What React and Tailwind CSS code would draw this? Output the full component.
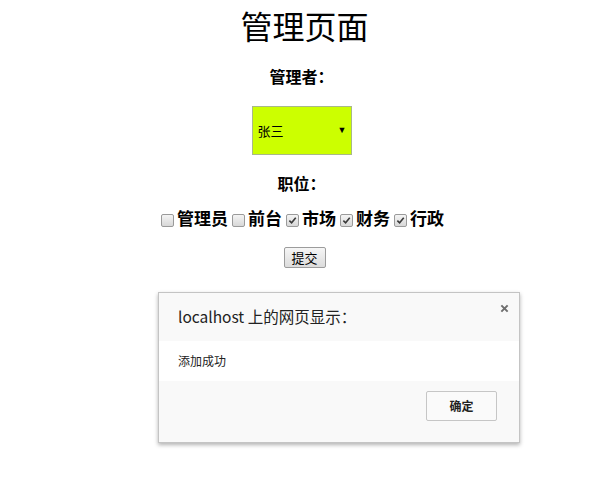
import { useState } from "react";

const roles = [
    { id: "admin", label: "管理员", checked: false },
    { id: "desk", label: "前台", checked: false },
    { id: "market", label: "市场", checked: true },
    { id: "finance", label: "财务", checked: true },
    { id: "office", label: "行政", checked: true },
];

function Box({ checked, onClick }) {
    return (
        <span
            onClick={onClick}
            className="inline-flex w-[13px] h-[13px] items-center justify-center border border-[#9a9a9a] rounded-[2px] bg-gradient-to-b from-[#f4f4f4] to-[#d8d8d8] cursor-pointer"
        >
            {checked && (
                <svg viewBox="0 0 10 10" className="w-[9px] h-[9px]">
                    <path d="M1.5 5.2 L4 7.6 L8.6 2" fill="none" stroke="#3a3a3a" strokeWidth="1.8" />
                </svg>
            )}
        </span>
    );
}

export default function App() {
    const [checks, setChecks] = useState(roles.map((r) => r.checked));

    const toggle = (i) => {
        setChecks(checks.map((c, j) => (j === i ? !c : c)));
    };

    return (
        <div className="relative w-[603px] h-[489px] bg-white text-black font-['Liberation_Serif','Noto_Sans_CJK_SC',serif] overflow-hidden">
            <div className="flex flex-col items-center pt-[8px]">
                <h1 className="text-[32px] leading-[40px] font-normal ml-[6px]">管理页面</h1>

                <div className="mt-[20px] text-[16px] leading-[20px] font-bold">管理者：</div>

                {/* Select */}
                <div className="mt-[18px] w-[100px] h-[49px] bg-[#ccff00] border border-[#a8b88a] flex items-center justify-between pl-[5px] pr-[4px]">
                    <span className="text-[13px] font-['Noto_Sans_CJK_SC',sans-serif]">张三</span>
                    <span className="text-[9px] leading-none">▼</span>
                </div>

                <div className="mt-[20px] text-[16px] leading-[20px] font-bold">职位：</div>

                {/* Roles */}
                <div className="mt-[15px] ml-[2px] flex items-center h-[20px] text-[17px] font-bold gap-[4px]">
                    {roles.map((r, i) => (
                        <label key={r.id} className="flex items-center gap-[3px]">
                            <Box checked={checks[i]} onClick={() => toggle(i)} />
                            <span>{r.label}</span>
                        </label>
                    ))}
                </div>

                <button className="mt-[17px] ml-[6px] w-[42px] h-[21px] border border-[#9c9c9c] rounded-[2px] bg-gradient-to-b from-[#f6f6f6] to-[#dcdcdc] text-[13px] leading-none font-['Noto_Sans_CJK_SC',sans-serif]">
                    提交
                </button>
            </div>

            {/* Alert dialog */}
            <div className="absolute left-[158px] top-[292px] w-[362px] h-[151px] border border-[#c4c4c4] bg-[#f9f9f9] shadow-[0_2px_4px_rgba(0,0,0,0.3)] flex flex-col font-['Noto_Sans_CJK_SC',sans-serif]">
                <div className="relative h-[48px] px-[19px] pt-[12px]">
                    <div className="text-[15.5px] leading-[22px] text-[#222]">localhost 上的网页显示：</div>
                    <svg viewBox="0 0 10 10" className="absolute right-[10px] top-[11px] w-[9px] h-[9px]">
                        <path d="M1.5 1.5 L8.5 8.5 M8.5 1.5 L1.5 8.5" stroke="#6f6f6f" strokeWidth="2.2" fill="none" />
                    </svg>
                </div>
                <div className="h-[40px] bg-white px-[19px] flex items-center text-[12px] text-[#222]">添加成功</div>
                <div className="flex-1 flex justify-end items-start pt-[10px] pr-[22px]">
                    <button className="w-[71px] h-[30px] border border-[#c6c6c6] rounded-[2px] bg-[#fafafa] text-[12px] font-bold text-[#222]">
                        确定
                    </button>
                </div>
            </div>
        </div>
    );
}
